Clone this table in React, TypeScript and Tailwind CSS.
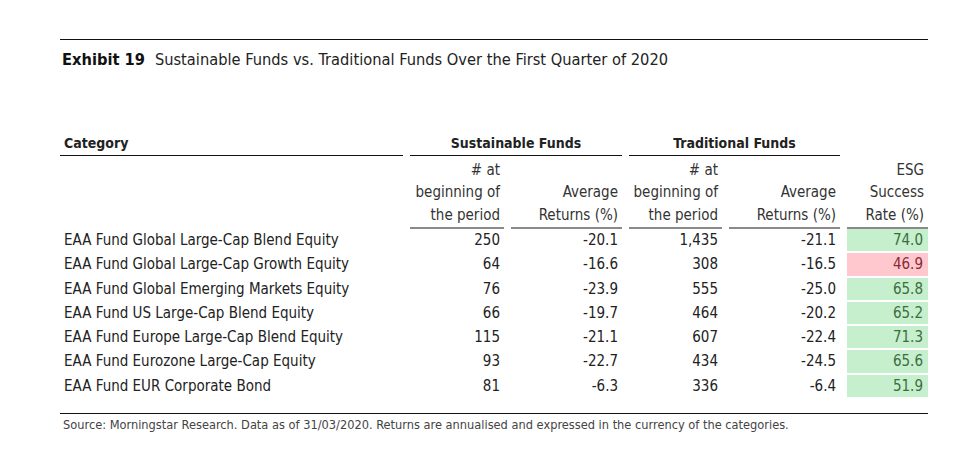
import React from 'react'

const rows = [
  { name: 'EAA Fund Global Large-Cap Blend Equity', sn: '250', sr: '-20.1', tn: '1,435', tr: '-21.1', esg: '74.0', ok: true },
  { name: 'EAA Fund Global Large-Cap Growth Equity', sn: '64', sr: '-16.6', tn: '308', tr: '-16.5', esg: '46.9', ok: false },
  { name: 'EAA Fund Global Emerging Markets Equity', sn: '76', sr: '-23.9', tn: '555', tr: '-25.0', esg: '65.8', ok: true },
  { name: 'EAA Fund US Large-Cap Blend Equity', sn: '66', sr: '-19.7', tn: '464', tr: '-20.2', esg: '65.2', ok: true },
  { name: 'EAA Fund Europe Large-Cap Blend Equity', sn: '115', sr: '-21.1', tn: '607', tr: '-22.4', esg: '71.3', ok: true },
  { name: 'EAA Fund Eurozone Large-Cap Equity', sn: '93', sr: '-22.7', tn: '434', tr: '-24.5', esg: '65.6', ok: true },
  { name: 'EAA Fund EUR Corporate Bond', sn: '81', sr: '-6.3', tn: '336', tr: '-6.4', esg: '51.9', ok: true },
]

const grid = 'grid grid-cols-[343px_94px_111px_93px_111px_81px] gap-x-[7px]'

function Sub({ lines }: { lines: string[] }) {
  return (
    <div className="flex h-[73px] flex-col justify-end border-b-2 border-[#8a8a8a] pb-[1px] pr-[4px] text-right leading-[22.5px] whitespace-nowrap text-[#333]">
      {lines.map((l) => <div key={l}>{l}</div>)}
    </div>
  )
}

export default function App() {
  return (
    <div className="w-[976px] h-[457px] bg-white overflow-hidden text-[#222]"
      style={{ fontFamily: '"DejaVu Sans Condensed", "DejaVu Sans", sans-serif' }}>
      <div className="ml-[60px] mt-[39px] w-[868px]">
        {/* title */}
        <div className="h-[92px] border-t border-[#111] pt-[9px] pl-[2px] text-[16.3px] leading-[22px] text-[#222] whitespace-nowrap">
          <span className="font-bold text-[#111]">Exhibit 19</span>
          <span className="ml-[10px]">Sustainable Funds vs. Traditional Funds Over the First Quarter of 2020</span>
        </div>

        {/* table */}
        <div className="text-[15px]">
          <div className={grid}>
            <div className="h-[25px] border-b border-[#111] pl-[4px] text-[14px] font-bold leading-[24px]">Category</div>
            <div className="col-span-2 h-[25px] border-b border-[#111] text-center text-[14px] font-bold leading-[24px]">Sustainable Funds</div>
            <div className="col-span-2 h-[25px] border-b border-[#111] text-center text-[14px] font-bold leading-[24px]">Traditional Funds</div>
            <div className="h-[25px]" />

            <div className="h-[73px]" />
            <Sub lines={['# at', 'beginning of', 'the period']} />
            <Sub lines={['Average', 'Returns (%)']} />
            <Sub lines={['# at', 'beginning of', 'the period']} />
            <Sub lines={['Average', 'Returns (%)']} />
            <Sub lines={['ESG', 'Success', 'Rate (%)']} />
          </div>

          {rows.map((r) => (
            <div key={r.name} className={`${grid} h-[24.3px] leading-[22.3px] whitespace-nowrap`}>
              <div className="pl-[4px]">{r.name}</div>
              <div className="pr-[4px] text-right">{r.sn}</div>
              <div className="pr-[4px] text-right">{r.sr}</div>
              <div className="pr-[4px] text-right">{r.tn}</div>
              <div className="pr-[4px] text-right">{r.tr}</div>
              <div className={r.ok
                ? 'h-[22.3px] bg-[#c6efce] pr-[5px] text-right text-[#3b6e3c]'
                : 'h-[22.3px] bg-[#ffc7ce] pr-[5px] text-right text-[#8a2a34]'}>{r.esg}</div>
            </div>
          ))}
        </div>

        <div className="mt-[14px] border-t border-[#111] pt-[1px] pl-[3px] text-[12.7px] leading-[20px] text-[#444] whitespace-nowrap">
          Source: Morningstar Research. Data as of 31/03/2020. Returns are annualised and expressed in the currency of the categories.
        </div>
      </div>
    </div>
  )
}
